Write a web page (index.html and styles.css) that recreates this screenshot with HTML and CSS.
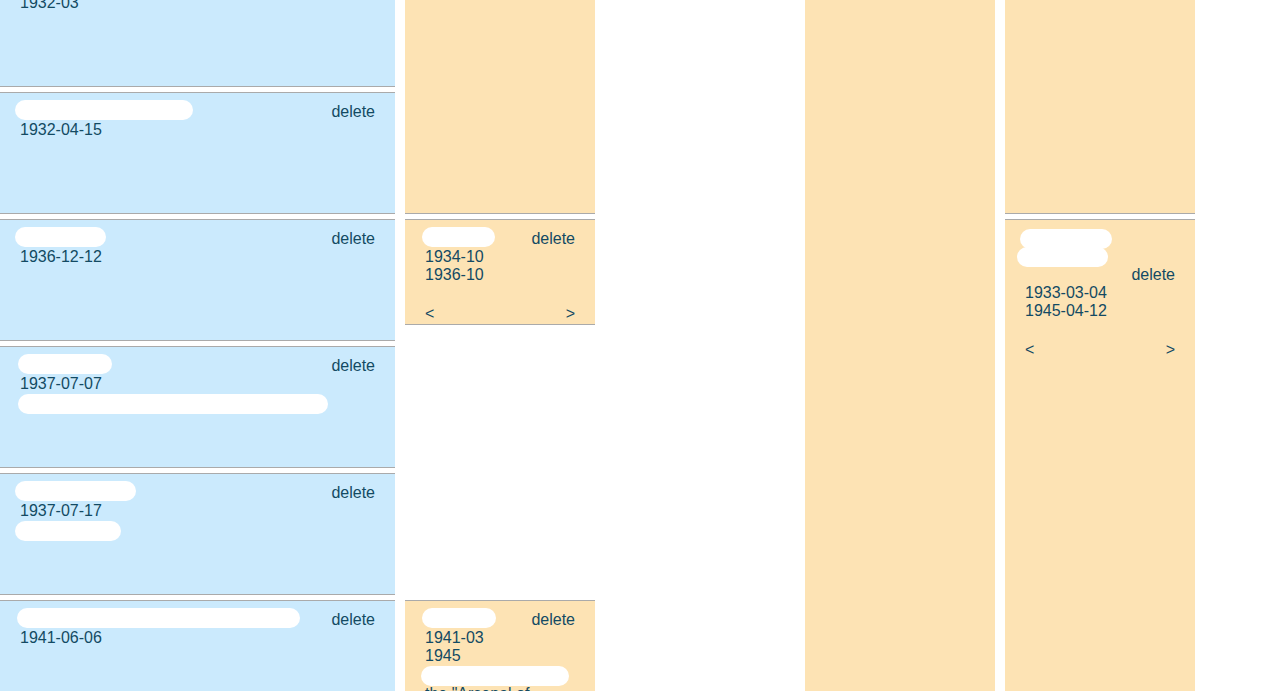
FILE: index.html
```html
<!DOCTYPE html>
<html>
<head>
<meta charset="utf-8">
<title>Timeline</title>
<link rel="stylesheet" href="styles.css">
</head>
<body>
<div class="board">
  <!-- person column -->
  <div class="card person r1">
    <div class="head"><span class="name"><span class="blob w150"></span></span><span class="del">delete</span></div>
    <div class="line">1929-03-04</div>
  </div>
  <div class="card person r2">
    <div class="head"><span class="name"><span class="blob w140"></span></span><span class="del">delete</span></div>
    <div class="line">1932-03</div>
  </div>
  <div class="card person r3">
    <div class="head"><span class="name"><span class="blob w178"></span></span><span class="del">delete</span></div>
    <div class="line">1932-04-15</div>
  </div>
  <div class="card person r4">
    <div class="head"><span class="name"><span class="blob w91"></span></span><span class="del">delete</span></div>
    <div class="line">1936-12-12</div>
  </div>
  <div class="card person r5">
    <div class="head"><span class="name"><span class="blob w94 in2"></span></span><span class="del">delete</span></div>
    <div class="line">1937-07-07</div>
    <div class="line"><span class="blob w310 in2 low"></span></div>
  </div>
  <div class="card person r6">
    <div class="head"><span class="name"><span class="blob w121"></span></span><span class="del">delete</span></div>
    <div class="line">1937-07-17</div>
    <div class="line"><span class="blob w106 low"></span></div>
  </div>
  <div class="card person r7">
    <div class="head"><span class="name"><span class="blob w283 in3"></span></span><span class="del">delete</span></div>
    <div class="line">1941-06-06</div>
  </div>

  <!-- event column -->
  <div class="card event c2 span-a">
    <div class="head"><span class="name"><span class="blob w74"></span></span><span class="del">delete</span></div>
    <div class="line">1929-10</div>
    <div class="line">1933</div>
    <div class="nav"><span>&lt;</span><span>&gt;</span></div>
  </div>
  <div class="card event c2 r4 auto">
    <div class="head"><span class="name"><span class="blob w73 in3"></span></span><span class="del">delete</span></div>
    <div class="line">1934-10</div>
    <div class="line">1936-10</div>
    <div class="nav"><span>&lt;</span><span>&gt;</span></div>
  </div>
  <div class="card event c2 r7 auto">
    <div class="head"><span class="name"><span class="blob w74 in3"></span></span><span class="del">delete</span></div>
    <div class="line">1941-03</div>
    <div class="line">1945</div>
    <div class="line"><span class="blob w148 in4 low"></span></div>
    <div class="text">the "Arsenal of Democracy"</div>
    <div class="nav"><span>&lt;</span><span>&gt;</span></div>
  </div>

  <!-- empty column c3 -->

  <div class="card event c4 span-all"></div>

  <div class="card event c5 span-a">
    <div class="head"><span class="name"><span class="blob w92"></span></span><span class="del">delete</span></div>
    <div class="line">1929-03-04</div>
    <div class="nav"><span>&lt;</span><span>&gt;</span></div>
  </div>
  <div class="card event c5 span-b">
    <div class="head wrap">
      <span class="name full"><span class="blob w92"></span><span class="blob w91 in8"></span></span>
      <span class="del">delete</span>
    </div>
    <div class="line">1933-03-04</div>
    <div class="line">1945-04-12</div>
    <div class="nav"><span>&lt;</span><span>&gt;</span></div>
  </div>
</div>
</body>
</html>
```

FILE: styles.css
```css
html, body {
  margin: 0;
  padding: 0;
  background: #ffffff;
  overflow: hidden;
}

body {
  font-family: "Liberation Sans", Arial, Helvetica, sans-serif;
  font-size: 16px;
  line-height: 18px;
  color: #134a63;
}

.board {
  display: grid;
  grid-template-columns: 395px 190px 190px 190px 190px;
  grid-auto-rows: 122px;
  column-gap: 10px;
  row-gap: 5px;
  margin-top: -162px;
}

.card {
  box-sizing: border-box;
  border-top: 1px solid #aaaaaa;
  border-bottom: 1px solid #aaaaaa;
  padding: 10px 20px;
  overflow: hidden;
}

.person {
  grid-column: 1;
  background: #cbeafd;
}

.event {
  background: #fde3b4;
}

.r1 { grid-row: 1; }
.r2 { grid-row: 2; }
.r3 { grid-row: 3; }
.r4 { grid-row: 4; }
.r5 { grid-row: 5; }
.r6 { grid-row: 6; }
.r7 { grid-row: 7; }

.c2 { grid-column: 2; }
.c4 { grid-column: 4; }
.c5 { grid-column: 5; }

.span-a { grid-row: 1 / 4; }
.span-b { grid-row: 4 / 9; }
.span-all { grid-row: 1 / 9; }

.auto {
  align-self: start;
  padding-bottom: 1px;
}

.head {
  display: flex;
  justify-content: space-between;
  align-items: flex-start;
}

.head.wrap {
  flex-wrap: wrap;
}

.name.full {
  flex-basis: 100%;
  display: flex;
  flex-direction: column;
  align-items: flex-start;
}

.del {
  margin-left: auto;
}

.line {
  height: 18px;
  white-space: nowrap;
}

.text {
  margin-top: 2px;
}

.nav {
  display: flex;
  justify-content: space-between;
  margin-top: 21px;
}

.blob {
  display: inline-block;
  vertical-align: top;
  height: 20px;
  margin-top: -3px;
  margin-left: -5px;
  border-radius: 10px;
  background: #ffffff;
}

.blob.low {
  margin-top: 1px;
}

.name.full .blob {
  margin-top: -1px;
  margin-bottom: -1px;
}

.in2 { margin-left: -2px; }
.in3 { margin-left: -3px; }
.in4 { margin-left: -4px; }
.in8 { margin-left: -8px; }

.w73 { width: 73px; }
.w74 { width: 74px; }
.w91 { width: 91px; }
.w92 { width: 92px; }
.w94 { width: 94px; }
.w106 { width: 106px; }
.w121 { width: 121px; }
.w140 { width: 140px; }
.w148 { width: 148px; }
.w150 { width: 150px; }
.w178 { width: 178px; }
.w283 { width: 283px; }
.w310 { width: 310px; }
```
